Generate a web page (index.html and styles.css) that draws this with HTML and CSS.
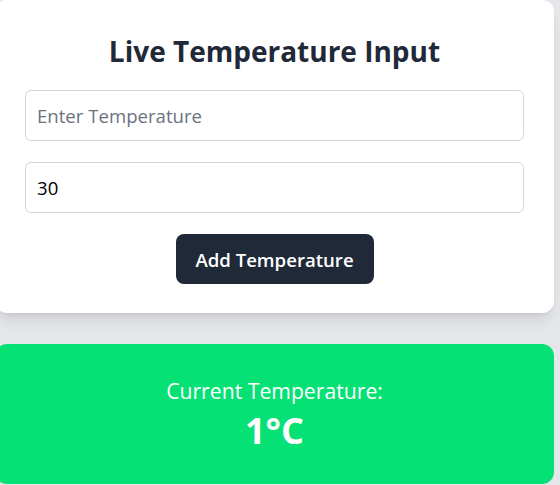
FILE: index.html
```html
<!DOCTYPE html>
<html lang="en">
<head>
<meta charset="utf-8">
<title>Live Temperature Input</title>
<link rel="stylesheet" href="styles.css">
</head>
<body>
  <main class="page">
    <section class="card input-card">
      <h1 class="title">Live Temperature Input</h1>
      <input class="field" type="text" placeholder="Enter Temperature">
      <input class="field" type="text" value="30">
      <div class="actions">
        <button class="btn" type="button">Add Temperature</button>
      </div>
    </section>
    <section class="card display-card">
      <p class="label">Current Temperature:</p>
      <p class="value">1°C</p>
    </section>
  </main>
</body>
</html>
```
FILE: styles.css
```css
* { box-sizing: border-box; }
html, body { margin: 0; padding: 0; }
body {
  background: #e5e7eb;
  font-family: "Open Sans", "Noto Sans", sans-serif;
  overflow: hidden;
}
.page {
  width: 559px;
  margin-left: -5px;
  display: flex;
  flex-direction: column;
  gap: 31px;
}
.card {
  border-radius: 12px;
}
.input-card {
  background: #ffffff;
  padding: 33px 30px 29px;
  box-shadow: 0 10px 15px -3px rgba(0,0,0,0.1), 0 4px 6px -4px rgba(0,0,0,0.1);
  display: flex;
  flex-direction: column;
  gap: 21px;
}
.title {
  margin: 0;
  text-align: center;
  font-size: 28px;
  line-height: 36px;
  font-weight: 700;
  color: #1f2937;
}
.field {
  height: 51px;
  width: 100%;
  border: 1px solid #d1d5db;
  border-radius: 6px;
  padding: 0 11px;
  font-family: inherit;
  font-size: 18.6px;
  color: #000;
  background: #fff;
  outline: none;
}
.field::placeholder { color: #6b7280; }
.actions {
  display: flex;
  justify-content: center;
}
.btn {
  height: 50px;
  width: 198px;
  border: none;
  border-radius: 8px;
  background: #1f2937;
  color: #fff;
  font-family: inherit;
  font-size: 18.6px;
  font-weight: 600;
  padding: 0;
}
.display-card {
  background: #05e174;
  height: 140px;
  display: flex;
  flex-direction: column;
  align-items: center;
  justify-content: center;
  color: #fff;
}
.label {
  margin: 0;
  font-size: 21.2px;
  line-height: 28px;
}
.value {
  margin: 6px 0 0;
  font-size: 36px;
  line-height: 40px;
  font-weight: 700;
}
```
